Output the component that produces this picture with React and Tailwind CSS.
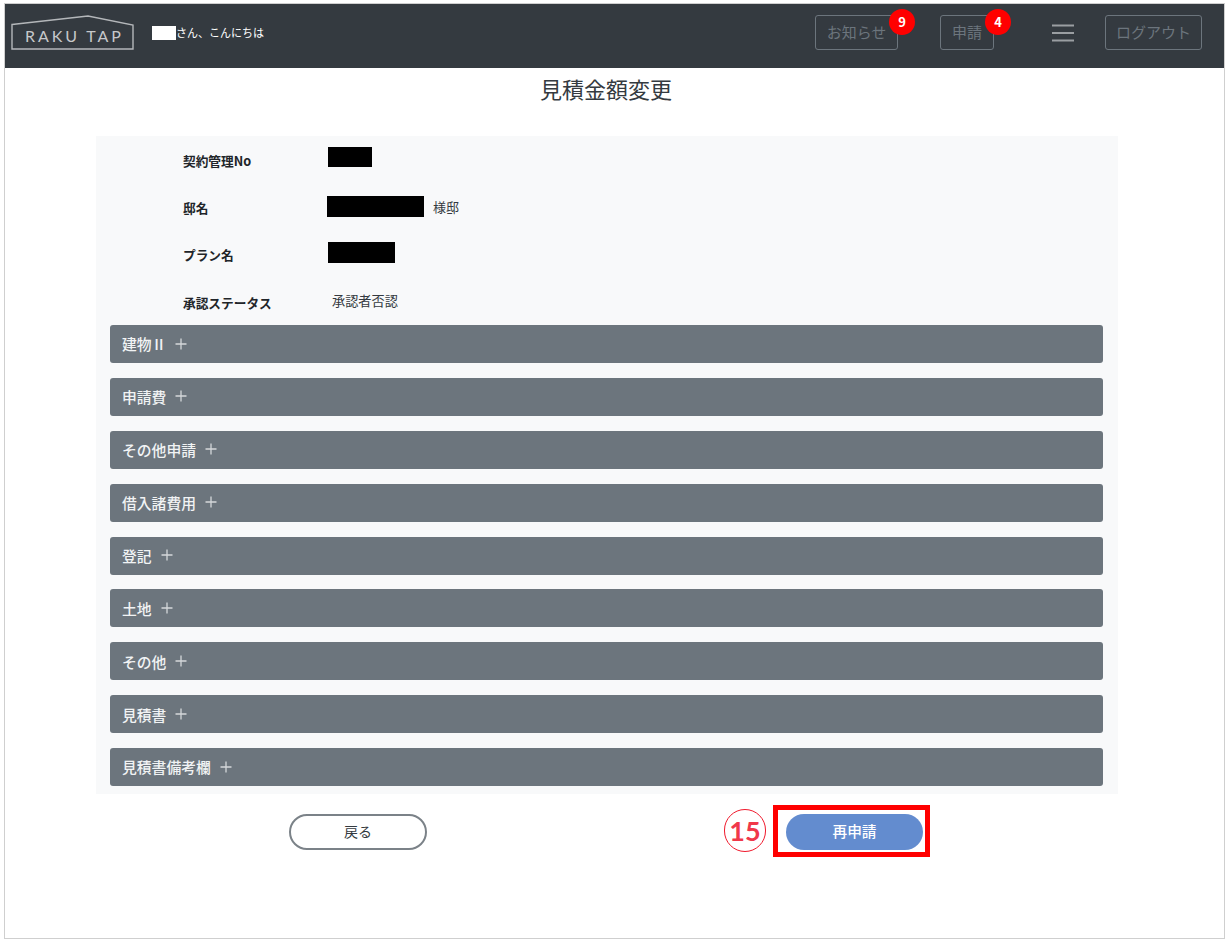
const font = { fontFamily: '"Noto Sans CJK JP", "Liberation Sans", sans-serif' };

const sections = ["建物Ⅱ", "申請費", "その他申請", "借入諸費用", "登記", "土地", "その他", "見積書", "見積書備考欄"];

function Logo() {
  return (
    <div className="relative w-[124px] h-[36px] -mt-[6px]">
      <svg width="124" height="36" viewBox="0 0 124 36" fill="none" className="absolute inset-0">
        <path d="M1 9.5 L77 1 L122 10 L122 34 L1 34 Z" stroke="#b4b7ba" strokeWidth="1.4" />
      </svg>
      <span className="absolute left-[14px] top-[12px] text-[16px] leading-[18px] tracking-[2.9px] text-[#c6c8ca] font-['Lato',sans-serif]">RAKU TAP</span>
    </div>
  );
}

function HeaderButton({ label, badge, width }) {
  return (
    <div className={`relative ${width} h-[35px]`}>
      <div className="h-full border border-[#6c757d] rounded-[3px] flex items-center justify-center text-[15px] text-[#6c757d]">{label}</div>
      {badge && (
        <span className="absolute -right-[17px] -top-[6px] w-[26px] h-[26px] rounded-full bg-[#ff0000] text-white text-[13px] font-bold flex items-center justify-center">{badge}</span>
      )}
    </div>
  );
}

function InfoRow({ label, children, height, valueOffset = "" }) {
  return (
    <div className={`flex ${height}`}>
      <div className="w-[145px] pl-[87px] shrink-0 box-content text-[12.7px] font-bold text-[#212529] leading-[18px] whitespace-nowrap pt-[16px]">{label}</div>
      <div className={`flex items-start ${valueOffset}`}>{children}</div>
    </div>
  );
}

export default function App() {
  return (
    <div className="w-[1228px] h-[941px] bg-white pt-[3px] pl-[4px] pr-[3px] pb-[2px] relative overflow-hidden" style={font}>
      <div className="h-full border border-[#cfcfcf] flex flex-col">
        <header className="h-[64px] shrink-0 bg-[#343a40] flex items-center pl-[6px] pr-[22px]">
          <Logo />
          <div className="ml-[17px] flex items-center -mt-[7px]">
            <span className="w-[24px] h-[14px] bg-white" />
            <span className="text-[11px] text-white">さん、こんにちは</span>
          </div>
          <div className="ml-auto flex items-center -mt-[7px]">
            <HeaderButton label="お知らせ" badge="9" width="w-[83px]" />
            <div className="w-[42px]" />
            <HeaderButton label="申請" badge="4" width="w-[54px]" />
            <svg width="24" height="20" viewBox="0 0 24 20" className="ml-[57px] mr-[30px]">
              <path d="M1 2.5H23M1 10H23M1 17.5H23" stroke="#9a9ea2" strokeWidth="2.2" />
            </svg>
            <HeaderButton label="ログアウト" width="w-[97px]" />
          </div>
        </header>

        <main className="flex-1 flex flex-col">
          <h1 className="h-[68px] pr-[18px] pl-[1px] pt-[4px] text-center text-[22px] leading-[32px] text-[#343a40]">見積金額変更</h1>

          <section className="ml-[91px] w-[1022px] h-[658px] bg-[#f8f9fa] pb-[7px]">
            <InfoRow label="契約管理No" height="h-[47px]">
              <span className="w-[44px] h-[20px] bg-black mt-[11px]" />
            </InfoRow>
            <InfoRow label="邸名" height="h-[47px]" valueOffset="-ml-[1px]">
              <span className="w-[97px] h-[21px] bg-black mt-[13px]" />
              <span className="ml-[9px] mt-[15px] text-[13px] leading-[18px] text-[#343a40]">様邸</span>
            </InfoRow>
            <InfoRow label="プラン名" height="h-[48px]">
              <span className="w-[67px] h-[21px] bg-black mt-[12px]" />
            </InfoRow>
            <InfoRow label="承認ステータス" height="h-[47px]" valueOffset="ml-[4px]">
              <span className="mt-[14px] text-[13.2px] leading-[18px] text-[#343a40]">承認者否認</span>
            </InfoRow>

            <div className="ml-[14px] mr-[15px] flex flex-col gap-[14.875px]">
              {sections.map((name) => (
                <div key={name} className="h-[38px] bg-[#6c757d] rounded-[3px] flex items-center pl-[12px] text-[14.8px] font-medium text-[#f1f3f4]">
                  <span className="mt-[1px]">{name}</span>
                  <svg width="12" height="12" viewBox="0 0 12 12" className="ml-[9px] -mt-[1px]">
                    <path d="M6 0.5V11.5M0.5 6H11.5" stroke="#d5d8da" strokeWidth="1.3" />
                  </svg>
                </div>
              ))}
            </div>
          </section>

          <div className="ml-[284px] mt-[20px] flex">
            <button className="w-[138px] h-[36px] rounded-full border-2 border-[#7b8288] bg-white text-[14px] text-[#343a40] pb-[2px]">戻る</button>
            <button className="ml-[359px] w-[137px] h-[36px] rounded-full bg-[#638ccf] text-[14.7px] font-medium text-white pb-[1px]">再申請</button>
          </div>
        </main>
      </div>

      {/* annotation */}
      <div className="absolute left-[773px] top-[805px] w-[157px] h-[52px] border-[5px] border-[#ff0000]" />
      <div className="absolute left-[724px] top-[809px] w-[42px] h-[43px] rounded-full border border-[#f0192c] flex items-center justify-center text-[27px] font-bold leading-none text-[#f0384a] font-['Lato',sans-serif]">15</div>
    </div>
  );
}
